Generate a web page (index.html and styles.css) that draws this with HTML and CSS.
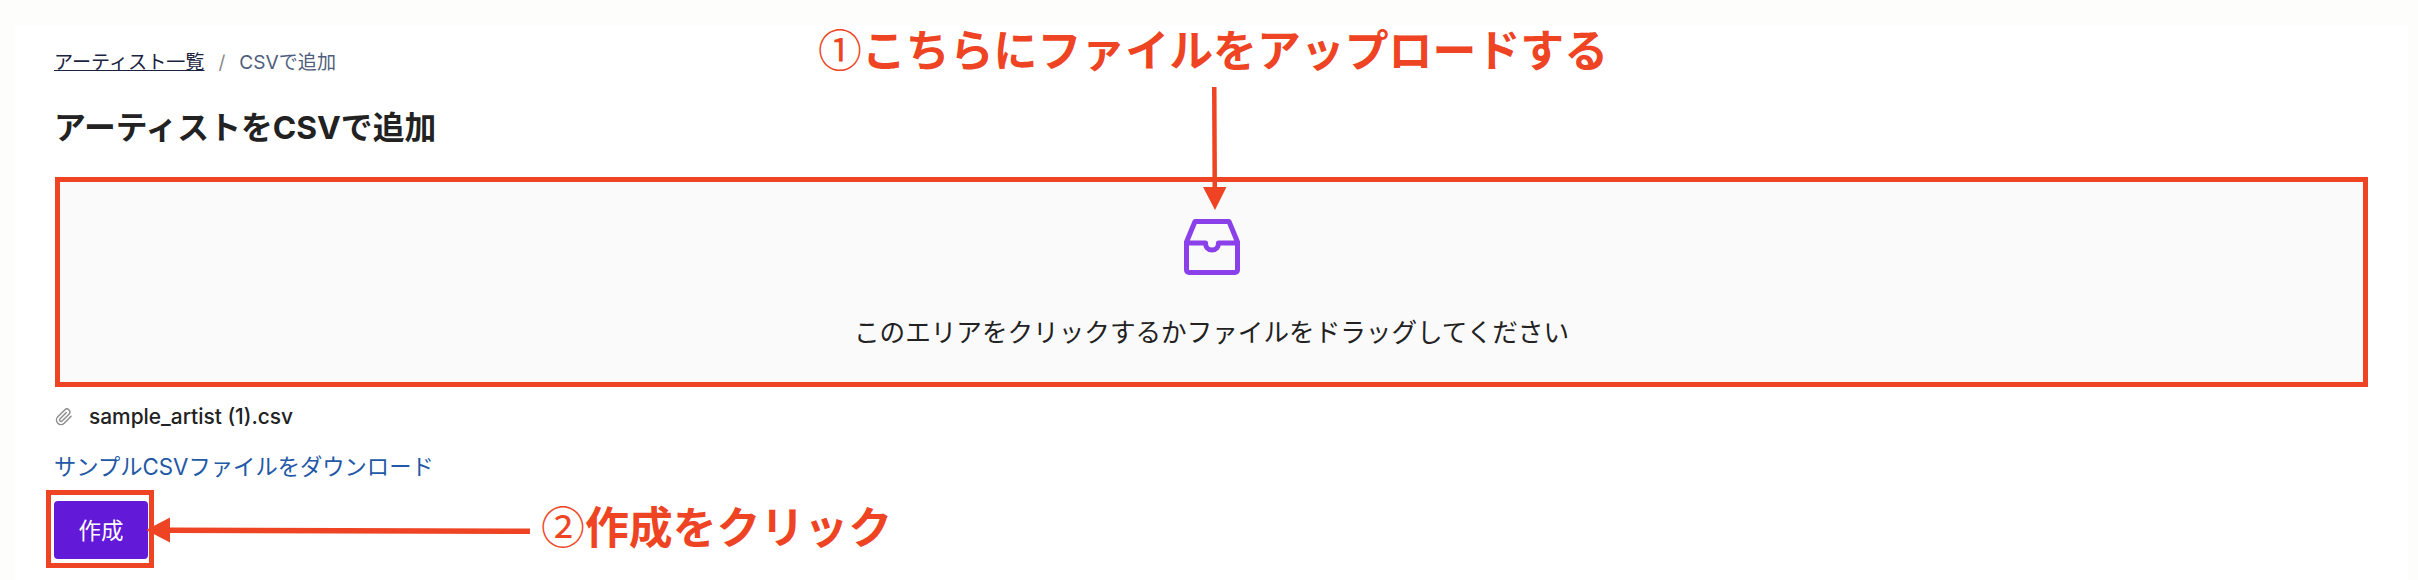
FILE: index.html
```html
<!DOCTYPE html>
<html lang="ja">
<head>
    <meta charset="UTF-8">
    <meta name="viewport" content="width=device-width, initial-scale=1.0">
    <title>アーティストをCSVで追加</title>
    <link rel="stylesheet" href="styles.css">
</head>
<body>
    <div class="page-card">
        <nav class="breadcrumb">
            <a href="#" class="breadcrumb-link">アーティスト一覧</a>
            <span class="breadcrumb-sep">/</span>
            <span class="breadcrumb-current">CSVで追加</span>
        </nav>
        <h1 class="page-title">アーティストをCSVで追加</h1>

        <div class="drop-area">
            <svg class="drop-icon" viewBox="0 0 56 56" fill="none" stroke="#8b41ea" stroke-width="5" stroke-linejoin="round" stroke-linecap="round">
                <path d="M11 2.5H45L53.5 23V51A2.5 2.5 0 0 1 51 53.5H5A2.5 2.5 0 0 1 2.5 51V23Z"/>
                <path d="M2.5 24H21.5C21.5 28 24 31 28 31S34.5 28 34.5 24H53.5"/>
            </svg>
            <p class="drop-text">このエリアをクリックするかファイルをドラッグしてください</p>
        </div>

        <div class="file-row">
            <svg class="clip-icon" viewBox="0 0 24 24" fill="none" stroke="#8c8c8c" stroke-width="1.9" stroke-linecap="round" stroke-linejoin="round">
                <path d="M21.44 11.05l-9.19 9.19a6 6 0 0 1-8.49-8.49l9.19-9.19a4 4 0 0 1 5.66 5.66l-9.2 9.19a2 2 0 0 1-2.83-2.83l8.49-8.48"/>
            </svg>
            <span class="file-name">sample_artist (1).csv</span>
        </div>

        <a href="#" class="sample-link">サンプルCSVファイルをダウンロード</a>

        <div class="button-frame">
            <button type="button" class="create-button">作成</button>
        </div>
    </div>

    <!-- 注釈 -->
    <div class="note note-upload"><span class="note-num">①</span>こちらにファイルをアップロードする</div>
    <svg class="arrow arrow-down" viewBox="0 0 30 130">
        <path d="M12 2H16.5L17 102H26.5L15 125L3 102H12.5Z"/>
    </svg>
    <div class="note note-create"><span class="note-num">②</span>作成をクリック</div>
    <svg class="arrow arrow-left" viewBox="0 0 390 30">
        <path d="M2 15L26 2.5V12.5L386 13.5V19L26 18V27.5Z"/>
    </svg>
</body>
</html>
```

FILE: styles.css
```css
* {
    box-sizing: border-box;
}
body {
    margin: 0;
    height: 580px;
    overflow: hidden;
    position: relative;
    background-color: #fdfdfb;
    font-family: Inter, "Noto Sans CJK JP", sans-serif;
    color: #222;
}
.page-card {
    margin: 25px 10px 0 15px;
    height: 555px;
    padding: 24px 0 0 40px;
    background-color: #fff;
}
.breadcrumb {
    display: flex;
    align-items: center;
    height: 26px;
    font-size: 19.1px;
    line-height: 26px;
}
.breadcrumb-link {
    color: #1a2340;
    margin-left: -1px;
}
.breadcrumb-sep {
    margin: 0 14px;
    color: #8a8a8a;
}
.breadcrumb-current {
    color: #4f5d7c;
}
.page-title {
    margin: 33px 0 29px -1px;
    font-size: 31.8px;
    line-height: 40px;
    font-weight: 700;
    color: #222;
}
.drop-area {
    display: flex;
    flex-direction: column;
    align-items: center;
    width: 2313px;
    height: 210px;
    padding-top: 37px;
    background-color: #fafafa;
    border: 5px solid #ee4423;
}
.drop-icon {
    width: 56px;
    height: 56px;
}
.drop-text {
    margin: 41px 0 0;
    font-size: 25.6px;
    line-height: 34px;
    color: #222;
}
.file-row {
    display: flex;
    align-items: center;
    gap: 16px;
    height: 30px;
    margin-top: 15px;
}
.clip-icon {
    width: 18px;
    height: 18px;
}
.file-name {
    font-size: 20.9px;
    line-height: 30px;
    font-weight: 500;
}
.sample-link {
    display: block;
    margin: 20px 0 8px -1px;
    font-size: 22.3px;
    line-height: 30px;
    color: #2258a6;
    text-decoration: none;
}
.button-frame {
    width: 108px;
    height: 78px;
    margin-left: -9px;
    padding: 6px 1px 4px 3px;
    border: 5px solid #ee4423;
}
.create-button {
    display: block;
    width: 94px;
    height: 58px;
    padding: 0 0 2px;
    border: none;
    border-radius: 4px;
    background-color: #6219d8;
    color: #fff;
    font-family: inherit;
    font-size: 22.5px;
}
.note {
    position: absolute;
    color: #ee4423;
    font-size: 43.9px;
    line-height: 50px;
    font-weight: 700;
    white-space: nowrap;
}
.note-num {
    font-family: "Noto Sans CJK JP", sans-serif;
    font-weight: 400;
}
.note-upload {
    left: 818px;
    top: 23px;
}
.note-create {
    left: 541px;
    top: 500px;
}
.arrow {
    position: absolute;
    fill: #ee4423;
}
.arrow-down {
    left: 1200px;
    top: 85px;
    width: 30px;
    height: 130px;
}
.arrow-left {
    left: 144px;
    top: 515px;
    width: 390px;
    height: 30px;
}
```
